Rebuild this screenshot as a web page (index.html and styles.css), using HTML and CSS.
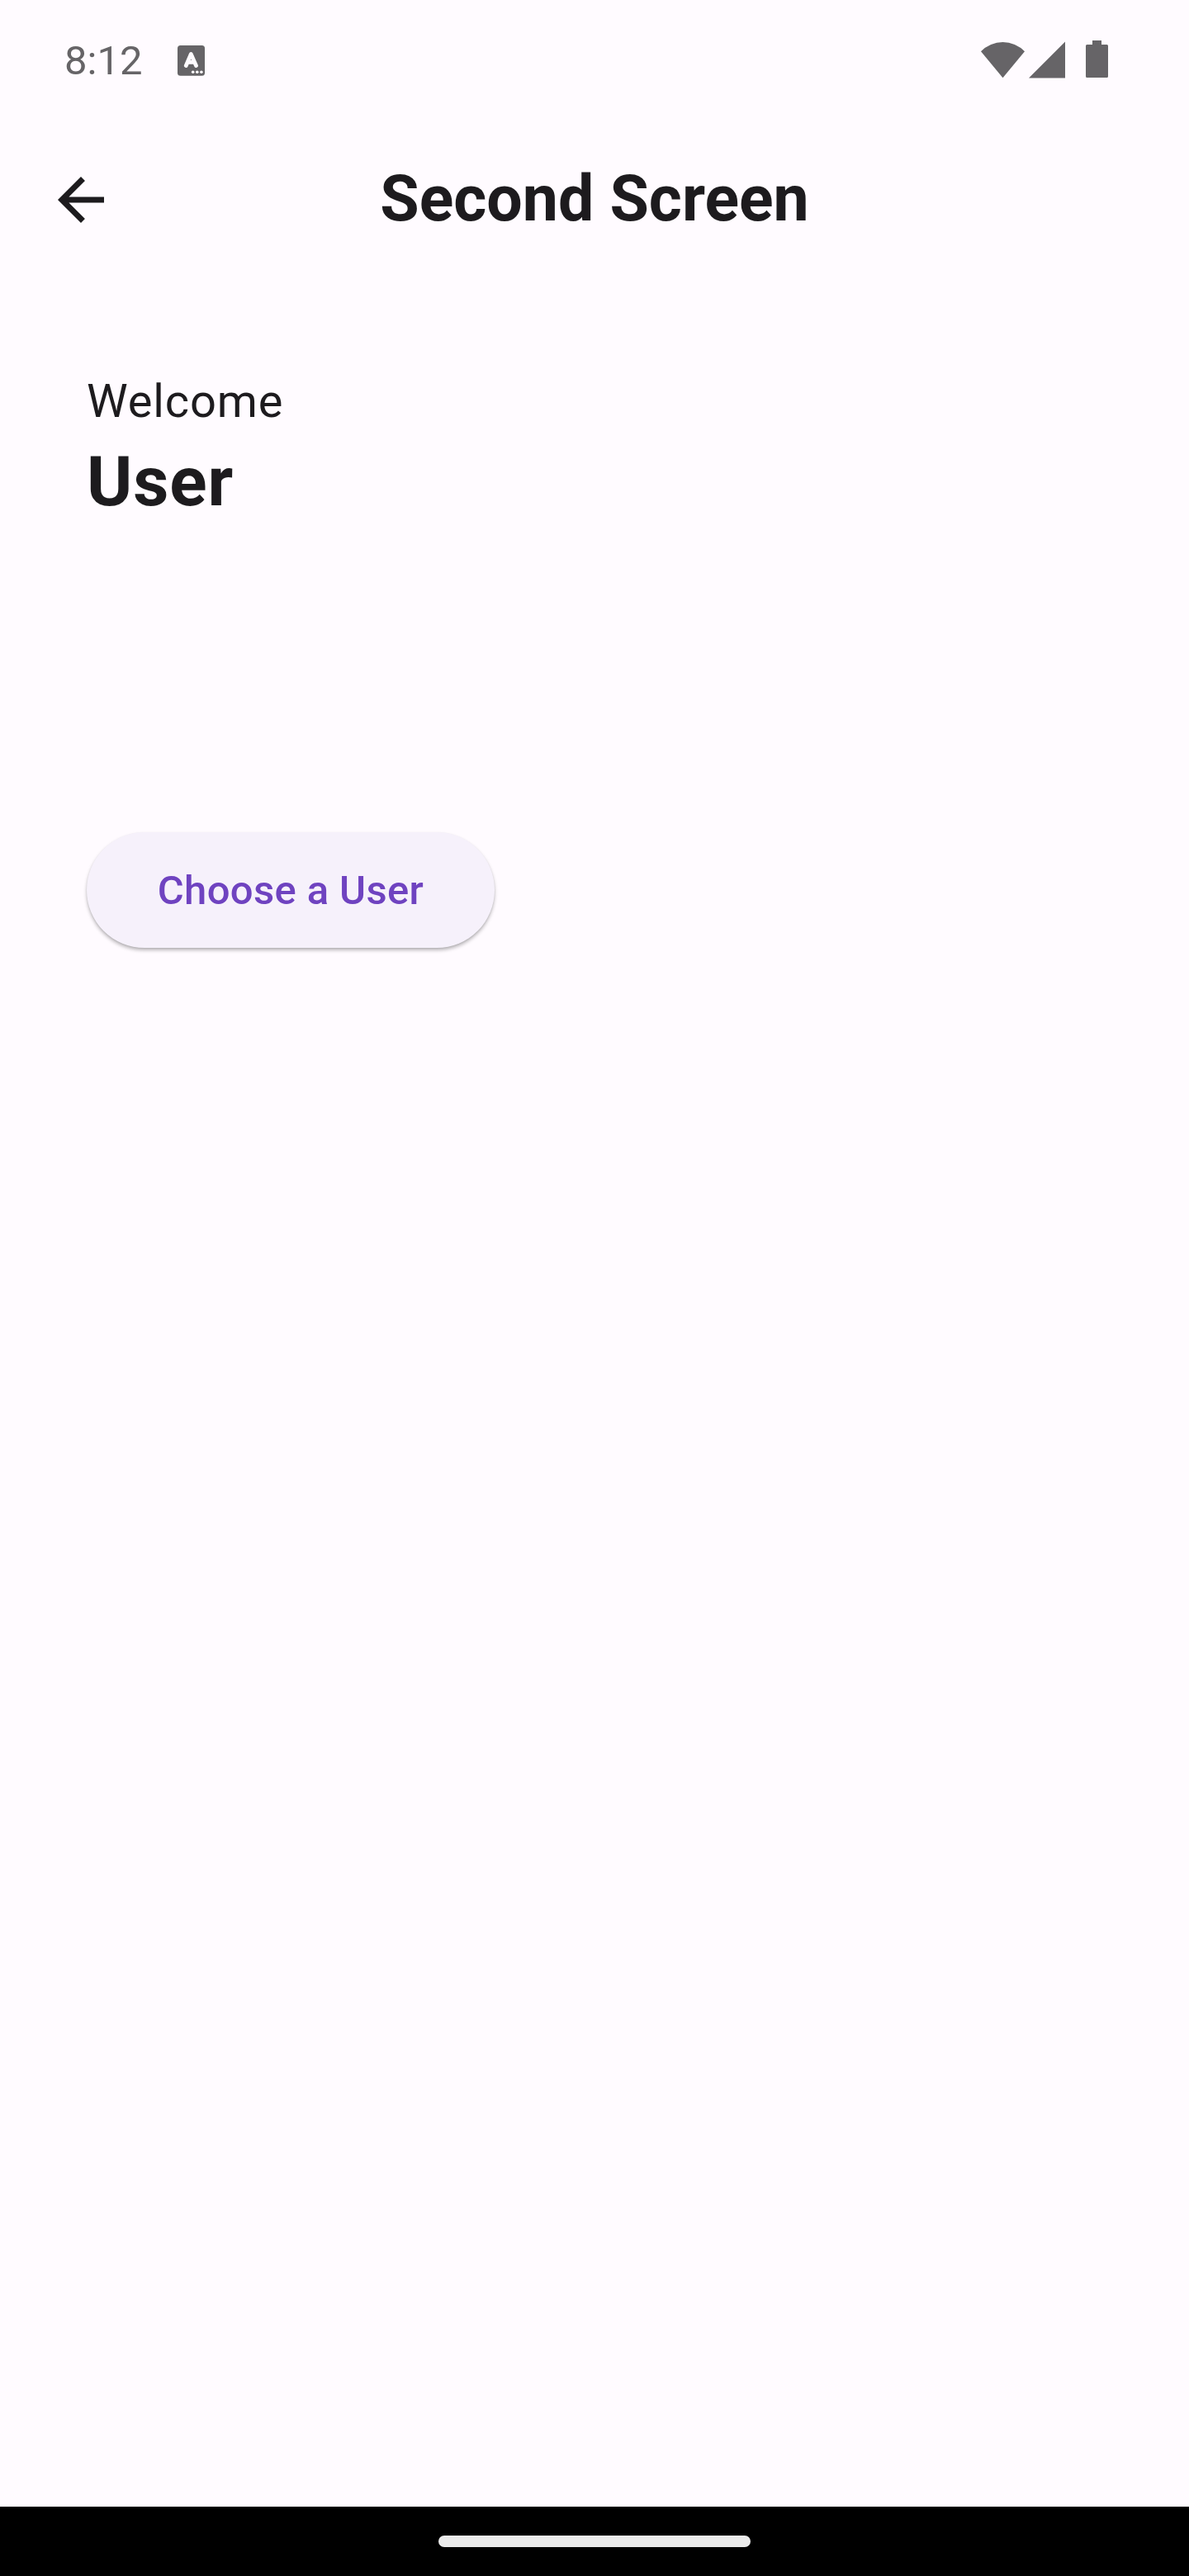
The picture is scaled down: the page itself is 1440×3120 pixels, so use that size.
FILE: index.html
```html
<!DOCTYPE html>
<html lang="en">
<head>
<meta charset="utf-8">
<title>Second Screen</title>
<link rel="stylesheet" href="styles.css">
</head>
<body>
<div class="screen">
  <div class="status-bar">
    <span class="clock">8:12</span>
    <svg class="keyboard-icon" viewBox="0 0 33 37" aria-hidden="true">
      <rect width="33" height="36.7" rx="3.5" fill="currentColor"/>
      <path d="M10.300 24.500 16.300 10.500 22.500 24.500M12.400 20.400h7.800" class="keyboard-letter"/>
      <circle cx="18.7" cy="32.3" r="1.8" fill="#fffbff"/>
      <circle cx="23.8" cy="32.3" r="1.8" fill="#fffbff"/>
      <circle cx="28.9" cy="32.3" r="1.8" fill="#fffbff"/>
    </svg>
    <svg class="system-icons" viewBox="0 0 154 46" aria-hidden="true">
      <path d="M0 13.3A37 37 0 0 1 53 13.3L26.5 45.3Z"/>
      <path d="M58 45.5H102V1.5Z"/>
      <path d="M135 0h11v5h6.500a1.500 1.500 0 0 1 1.500 1.500v37a1.500 1.500 0 0 1-1.500 1.500h-24a1.500 1.500 0 0 1-1.500-1.500v-37a1.500 1.500 0 0 1 1.500-1.500h6.500z"/>
    </svg>
  </div>
  <header class="app-bar">
    <svg class="back-icon" viewBox="0 0 24 24" aria-label="Back">
      <path d="M20 11H7.830l5.590-5.590L12 4l-8 8 8 8 1.410-1.410L7.830 13H20v-2z"/>
    </svg>
    <h1 class="title">Second Screen</h1>
  </header>
  <main class="content">
    <p class="welcome">Welcome</p>
    <p class="name">User</p>
    <button class="choose" type="button">Choose a User</button>
  </main>
  <footer class="nav-bar"><div class="nav-handle"></div></footer>
</div>
</body>
</html>
```
FILE: styles.css
```css
* {
  box-sizing: border-box;
}

body {
  margin: 0;
  font-family: Roboto, sans-serif;
  color: #1d1b1e;
  background: #fffbff;
}

.screen {
  display: flex;
  flex-direction: column;
  height: 3120px;
}

.status-bar {
  display: flex;
  align-items: flex-start;
  height: 144px;
  padding: 0 98px 0 78px;
  color: #666467;
}

.clock {
  width: 137px;
  margin-top: 44px;
  font-size: 49px;
  line-height: 60px;
}

.keyboard-icon {
  width: 33px;
  height: 37px;
  margin-top: 55px;
}

.keyboard-letter {
  fill: none;
  stroke: #fffbff;
  stroke-width: 4.8;
  stroke-linecap: round;
  stroke-linejoin: round;
}

.system-icons {
  width: 154px;
  height: 46px;
  margin: 49px 0 0 auto;
  fill: currentColor;
}

.app-bar {
  display: grid;
  grid-template-columns: 84px 1fr 84px;
  align-items: center;
  height: 196px;
  padding: 0 56px;
}

.back-icon {
  width: 84px;
  height: 84px;
  fill: #1d1b1e;
}

.title {
  margin: 0;
  padding-bottom: 3px;
  font-size: 77px;
  font-weight: 700;
  line-height: 98px;
  text-align: center;
}

.content {
  flex: 1;
  padding: 104px 105px 0;
}

.welcome,
.name {
  margin: 0;
}

.welcome {
  font-size: 56px;
  line-height: 84px;
  letter-spacing: 0.875px;
}

.name {
  font-size: 84px;
  font-weight: 700;
  line-height: 112px;
  letter-spacing: 0.875px;
}

.choose {
  display: block;
  width: 494px;
  height: 140px;
  margin-top: 368px;
  padding: 2px 0 0;
  border: 0;
  border-radius: 70px;
  background: #f6f1fb;
  box-shadow: 0 3px 4px rgba(0, 0, 0, 0.26), 0 1px 2px rgba(0, 0, 0, 0.08);
  color: #6f43c0;
  font: 500 49px/70px Roboto, sans-serif;
  letter-spacing: 0.35px;
}

.nav-bar {
  display: flex;
  align-items: center;
  justify-content: center;
  height: 84px;
  background: #000;
}

.nav-handle {
  width: 378px;
  height: 14px;
  border-radius: 7px;
  background: #ebebeb;
}
```
